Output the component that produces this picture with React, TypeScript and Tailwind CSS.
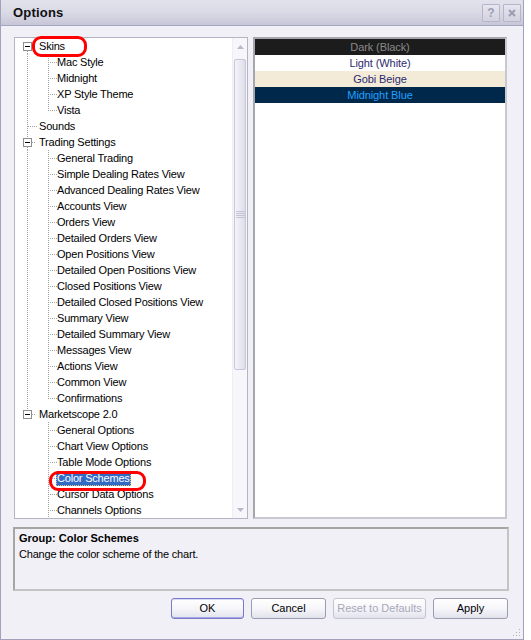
import React from "react";

type Row = {
  label: string;
  level: 0 | 1;
  box?: boolean;
  above?: boolean;
  below?: boolean;
  rootCont?: boolean;
  last?: boolean;
  selected?: boolean;
};

const rows: Row[] = [
  { label: "Skins", level: 0, box: true, below: true },
  { label: "Mac Style", level: 1, rootCont: true },
  { label: "Midnight", level: 1, rootCont: true },
  { label: "XP Style Theme", level: 1, rootCont: true },
  { label: "Vista", level: 1, rootCont: true, last: true },
  { label: "Sounds", level: 0, above: true, below: true },
  { label: "Trading Settings", level: 0, box: true, above: true, below: true },
  { label: "General Trading", level: 1, rootCont: true },
  { label: "Simple Dealing Rates View", level: 1, rootCont: true },
  { label: "Advanced Dealing Rates View", level: 1, rootCont: true },
  { label: "Accounts View", level: 1, rootCont: true },
  { label: "Orders View", level: 1, rootCont: true },
  { label: "Detailed Orders View", level: 1, rootCont: true },
  { label: "Open Positions View", level: 1, rootCont: true },
  { label: "Detailed Open Positions View", level: 1, rootCont: true },
  { label: "Closed Positions View", level: 1, rootCont: true },
  { label: "Detailed Closed Positions View", level: 1, rootCont: true },
  { label: "Summary View", level: 1, rootCont: true },
  { label: "Detailed Summary View", level: 1, rootCont: true },
  { label: "Messages View", level: 1, rootCont: true },
  { label: "Actions View", level: 1, rootCont: true },
  { label: "Common View", level: 1, rootCont: true },
  { label: "Confirmations", level: 1, rootCont: true, last: true },
  { label: "Marketscope 2.0", level: 0, box: true, above: true },
  { label: "General Options", level: 1 },
  { label: "Chart View Options", level: 1 },
  { label: "Table Mode Options", level: 1 },
  { label: "Color Schemes", level: 1, selected: true },
  { label: "Cursor Data Options", level: 1 },
  { label: "Channels Options", level: 1 },
];

const DOT = "#a0a0a0";

function TreeLines({ r }: { r: Row }) {
  if (r.level === 0) {
    return (
      <svg width={24} height={16} className="shrink-0" shapeRendering="crispEdges">
        {r.box ? (
          <>
            {r.above && <line x1={12.5} y1={0} x2={12.5} y2={4} stroke={DOT} strokeDasharray="1 1" />}
            {r.below && <line x1={12.5} y1={13} x2={12.5} y2={16} stroke={DOT} strokeDasharray="1 1" />}
            <rect x={8.5} y={4.5} width={8} height={8} fill="#ffffff" stroke="#8e8e8e" />
            <line x1={10} y1={8.5} x2={15} y2={8.5} stroke="#000000" />
            <line x1={17} y1={8.5} x2={21} y2={8.5} stroke={DOT} strokeDasharray="1 1" />
          </>
        ) : (
          <>
            <line x1={12.5} y1={0} x2={12.5} y2={16} stroke={DOT} strokeDasharray="1 1" />
            <line x1={13} y1={8.5} x2={22} y2={8.5} stroke={DOT} strokeDasharray="1 1" />
          </>
        )}
      </svg>
    );
  }
  return (
    <svg width={42} height={16} className="shrink-0" shapeRendering="crispEdges">
      {r.rootCont && <line x1={12.5} y1={0} x2={12.5} y2={16} stroke={DOT} strokeDasharray="1 1" />}
      <line x1={33.5} y1={0} x2={33.5} y2={r.last ? 9 : 16} stroke={DOT} strokeDasharray="1 1" />
      <line x1={35} y1={8.5} x2={42} y2={8.5} stroke={DOT} strokeDasharray="1 1" />
    </svg>
  );
}

function Scrollbar() {
  return (
    <div className="w-[15px] shrink-0 h-full flex flex-col bg-[#f7f7fb] border-l border-[#eeeef4]">
      <div className="h-[17px] flex items-center justify-center">
        <svg width={7} height={4}>
          <polygon points="0,4 3.5,0 7,4" fill="#b8b8cc" />
        </svg>
      </div>
      <div className="mt-[4px] h-[311px] mx-[1px] rounded-[2px] border border-[#c6c6d8] bg-gradient-to-r from-[#f4f4fa] to-[#dedee9] flex flex-col items-center justify-center gap-[1px]">
        <div className="h-px w-[9px] bg-[#c4c4d6]" />
        <div className="h-px w-[9px] bg-[#c4c4d6]" />
        <div className="h-px w-[9px] bg-[#c4c4d6]" />
        <div className="h-px w-[9px] bg-[#c4c4d6]" />
      </div>
      <div className="flex-1" />
      <div className="h-[17px] flex items-center justify-center">
        <svg width={7} height={4}>
          <polygon points="0,0 7,0 3.5,4" fill="#b8b8cc" />
        </svg>
      </div>
    </div>
  );
}

function Btn({ children, w, primary, disabled }: { children: React.ReactNode; w: string; primary?: boolean; disabled?: boolean }) {
  return (
    <div
      className={
        "h-[21px] flex items-center justify-center rounded-[3px] border bg-gradient-to-b from-[#ffffff] via-[#f6f6fa] to-[#e2e2ec] text-[11px] " +
        w +
        " " +
        (primary
          ? "border-[#7a7ac8] shadow-[inset_0_-1px_0_#a8a8e8,inset_0_1px_0_#d8d8f8]"
          : "border-[#9c9cb0]") +
        " " +
        (disabled ? "text-[#a8a8b8] border-[#c4c4d0]" : "text-black")
      }
    >
      {children}
    </div>
  );
}

export default function App() {
  const font = "font-['Liberation_Sans',Arial,sans-serif]";
  return (
    <div className={"w-[531px] h-[640px] bg-white " + font}>
      <div className="relative w-[524px] h-[640px] bg-[#f1f0f6] border border-t-0 border-[#a2a2bc] flex flex-col">
        {/* Title bar */}
        <div className="h-[26px] shrink-0 flex items-center bg-gradient-to-b from-[#e2e2ec] via-[#dadae6] to-[#c6c6d8] border-b border-[#a6a6be] pl-[12px] pr-[2px]">
          <div className="text-[13px] font-bold text-[#101010] tracking-[0.2px] flex-1">Options</div>
          <div className="flex gap-[3px]">
            <div className="w-[18px] h-[18px] rounded-[1px] border border-[#b6b6ca] bg-gradient-to-b from-[#e6e6f0] to-[#d2d2e0] flex items-center justify-center text-[12px] font-bold text-[#9c9cb2] leading-none">?</div>
            <div className="w-[18px] h-[18px] rounded-[1px] border border-[#b6b6ca] bg-gradient-to-b from-[#e6e6f0] to-[#d2d2e0] flex items-center justify-center">
              <svg width={8} height={8}>
                <path d="M1 1 L7 7 M7 1 L1 7" stroke="#9c9cb2" strokeWidth={2} />
              </svg>
            </div>
          </div>
        </div>

        {/* Panels */}
        <div className="flex mt-[11px] pl-[13px] h-[482px]">
          <div className="relative w-[234px] h-[482px] border border-[#b4b4c4] bg-white flex">
            <div className="flex-1 overflow-hidden">
              {rows.map((r) => (
                <div key={r.label} className="flex h-[16px] items-center text-[11px] leading-[16px] text-black tracking-[-0.2px] whitespace-nowrap">
                  <TreeLines r={r} />
                  {r.selected ? (
                    <span className="-ml-px pl-px pr-px h-[15px] leading-[15px] bg-[#316ac5] text-white outline-1 outline-dotted outline-[#e0c878] -outline-offset-1">
                      {r.label}
                    </span>
                  ) : (
                    <span>{r.label}</span>
                  )}
                </div>
              ))}
            </div>
            <Scrollbar />
            {/* red annotations */}
            <div className="absolute left-[17px] top-[-2px] w-[55px] h-[21px] border-[3px] border-[#ff0000] rounded-[9px] pointer-events-none" />
            <div className="absolute left-[34px] top-[433px] w-[97px] h-[20px] border-[3px] border-[#ff0000] rounded-[9px] pointer-events-none" />
          </div>

          <div className="ml-[5px] w-[254px] h-[482px] border-2 border-[#a6a6ae] border-r-[#c8c8d0] border-b-[#c8c8d0] bg-white text-[11px] leading-[16px] tracking-[-0.1px]">
            <div className="h-[16px] bg-[#1c1c1c] text-[#8a8a8a] text-center">Dark (Black)</div>
            <div className="h-[16px] bg-white text-[#2b2b6e] text-center">Light (White)</div>
            <div className="h-[16px] bg-[#f3ead8] text-[#2b2b6e] text-center">Gobi Beige</div>
            <div className="h-[16px] bg-[#00284b] text-[#21a0ff] text-center">Midnight Blue</div>
          </div>
        </div>

        {/* Description */}
        <div className="ml-[12px] mt-[8px] w-[496px] h-[64px] border-2 border-[#a8a6a2] border-r-[#c6c4c2] border-b-[#c6c4c2] px-[4px] pt-[1px] text-[11px] leading-[16px] text-black">
          <div className="font-bold">Group: Color Schemes</div>
          <div className="tracking-[-0.2px]">Change the color scheme of the chart.</div>
        </div>

        {/* Buttons */}
        <div className="flex mt-[7px] pl-[170px] gap-[7px]">
          <Btn w="w-[73px]" primary>OK</Btn>
          <Btn w="w-[75px]">Cancel</Btn>
          <Btn w="w-[93px]" disabled>Reset to Defaults</Btn>
          <Btn w="w-[75px]">Apply</Btn>
        </div>

        {/* resize grip */}
        <svg className="absolute right-[2px] bottom-[2px]" width={8} height={8}>
          <rect x={6} y={0} width={1} height={1} fill="#b0b0c0" />
          <rect x={3} y={3} width={1} height={1} fill="#b0b0c0" />
          <rect x={6} y={3} width={1} height={1} fill="#b0b0c0" />
          <rect x={0} y={6} width={1} height={1} fill="#b0b0c0" />
          <rect x={3} y={6} width={1} height={1} fill="#b0b0c0" />
          <rect x={6} y={6} width={1} height={1} fill="#b0b0c0" />
        </svg>
      </div>
    </div>
  );
}
